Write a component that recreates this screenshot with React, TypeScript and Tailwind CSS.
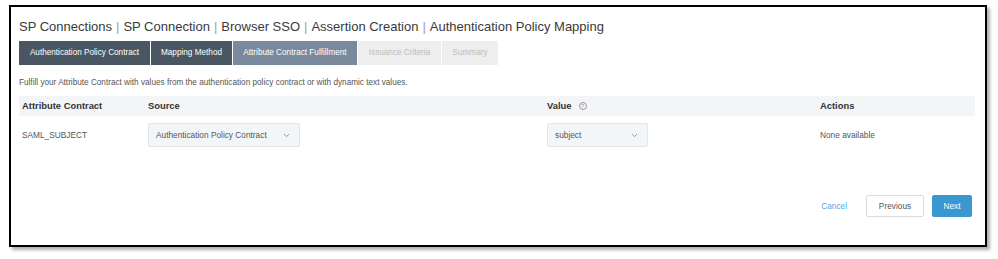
import { ChevronDown } from "lucide-react";

const crumbs = [
  "SP Connections",
  "SP Connection",
  "Browser SSO",
  "Assertion Creation",
  "Authentication Policy Mapping",
];

const tabs = [
  { label: "Authentication Policy Contract", w: "w-[131px]", state: "done" },
  { label: "Mapping Method", w: "w-[81px]", state: "done" },
  { label: "Attribute Contract Fulfillment", w: "w-[124px]", state: "active" },
  { label: "Issuance Criteria", w: "w-[83px]", state: "todo" },
  { label: "Summary", w: "w-[56px]", state: "todo" },
];

function Select({ value, w }: { value: string; w: string }) {
  return (
    <div
      className={`${w} h-[24px] flex items-center justify-between pl-[7px] pr-[8px] bg-[#f3f6f9] border border-[#e1e6eb] rounded-[2px] text-[8.3px] text-[#555]`}
    >
      <span>{value}</span>
      <ChevronDown className="w-[9px] h-[9px] text-[#777]" strokeWidth={2} />
    </div>
  );
}

export default function App() {
  return (
    <div className="w-[998px] h-[259px] bg-white pt-[5px] pl-[9px] font-['Liberation_Sans',Arial,sans-serif]">
      <div className="w-[978px] h-[242px] border-2 border-black bg-white shadow-[3px_3px_3px_rgba(0,0,0,0.3)] pl-[8px] pr-[10px] pt-[10px] flex flex-col">
        <h1 className="h-[20px] leading-[20px] text-[13px] text-[#3a3a3a] flex items-center">
          {crumbs.map((c, i) => (
            <span key={c} className="flex items-center">
              {i > 0 && <span className="mx-[4px] text-[#a0a0a0]">|</span>}
              {c}
            </span>
          ))}
        </h1>

        <div className="mt-[4px] flex gap-px">
          {tabs.map((t) => (
            <div
              key={t.label}
              className={`${t.w} h-[24px] flex items-center justify-center text-[8.2px] ${
                t.state === "done"
                  ? "bg-[#4a5762] text-white"
                  : t.state === "active"
                  ? "bg-[#7a8a9c] text-white"
                  : "bg-[#eeeeee] text-[#bdbdbd]"
              }`}
            >
              {t.label}
            </div>
          ))}
        </div>

        <p className="mt-[11px] h-[14px] leading-[14px] text-[8.2px] text-[#555]">
          Fulfill your Attribute Contract with values from the authentication policy contract or with dynamic text values.
        </p>

        <div className="mt-[6px] h-[20px] bg-[#f4f5f7] grid grid-cols-[126px_399px_273px_1fr] items-center pl-[3px] text-[9.4px] font-bold text-[#333]">
          <span>Attribute Contract</span>
          <span>Source</span>
          <span className="flex items-center gap-[7px]">
            Value
            <span className="w-[8px] h-[8px] rounded-full border border-[#999] text-[6px] leading-none font-normal text-[#999] flex items-center justify-center">
              ?
            </span>
          </span>
          <span>Actions</span>
        </div>

        <div className="pt-[7px] grid grid-cols-[126px_399px_273px_1fr] items-center pl-[3px] text-[8.3px] text-[#555]">
          <span>SAML_SUBJECT</span>
          <div>
            <Select value="Authentication Policy Contract" w="w-[152px]" />
          </div>
          <div>
            <Select value="subject" w="w-[101px]" />
          </div>
          <span>None available</span>
        </div>

        <div className="mt-[48px] flex items-center justify-end text-[8.3px]">
          <button className="text-[#5aa7dd] mr-[19px]">Cancel</button>
          <button className="w-[58px] h-[22px] border border-[#dcdcdc] rounded-[2px] bg-white text-[#555] mr-[8px]">
            Previous
          </button>
          <button className="w-[40px] h-[22px] rounded-[2px] bg-[#3a97d0] text-white mr-[3px]">
            Next
          </button>
        </div>
      </div>
    </div>
  );
}
